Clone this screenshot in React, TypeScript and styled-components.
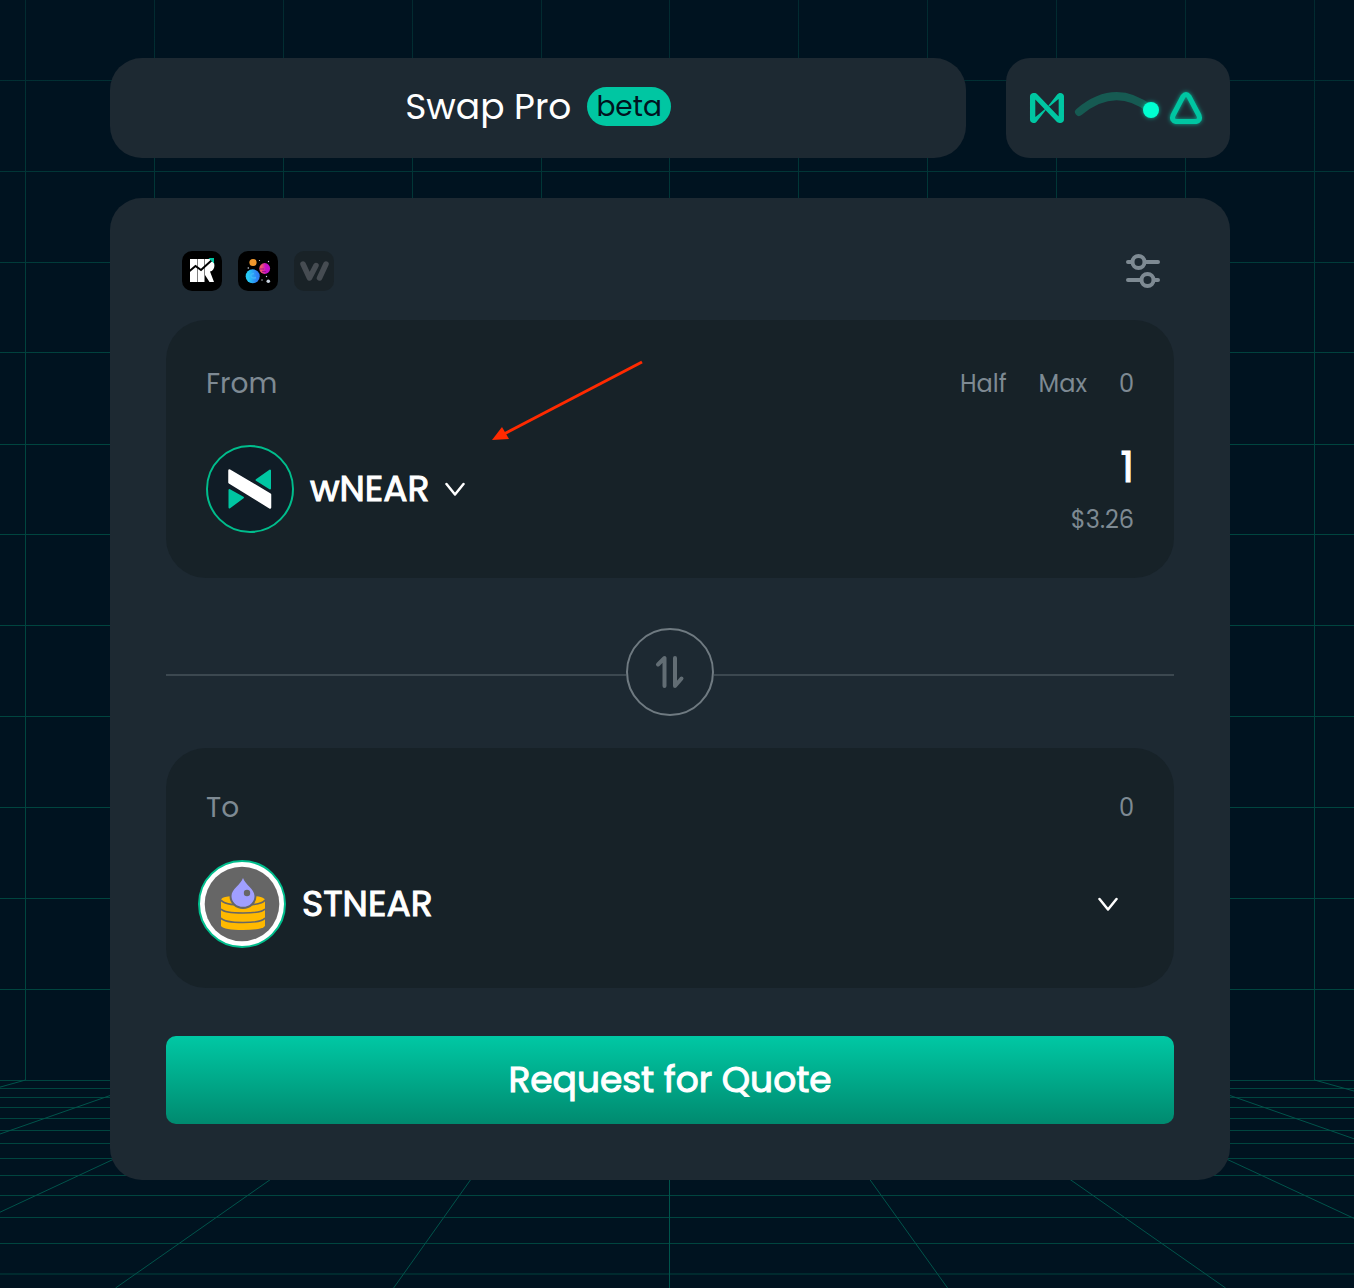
import React from "react";
import styled, { createGlobalStyle } from "styled-components";

const color = {
  page: "#001320",
  card: "#1d2932",
  panel: "#172228",
  mint: "#00c6a2",
  muted: "#7e8a93",
  white: "#ffffff",
};

const GlobalStyle = createGlobalStyle`
  * { box-sizing: border-box; }
  body {
    margin: 0;
    background: ${color.page};
    color: ${color.white};
    font-family: Poppins, Inter, "Liberation Sans", sans-serif;
  }
  button, input { font: inherit; color: inherit; }
  button { background: none; border: 0; padding: 0; cursor: pointer; }
  svg { display: block; flex: none; }
`;

const Backdrop = styled.svg`
  position: fixed;
  inset: 0;
  z-index: -1;
  width: 100%;
  height: 100%;
`;

const Page = styled.main`
  display: grid;
  gap: 40px;
  padding: 58px 124px 108px 110px;
`;

const Header = styled.header`
  display: flex;
  gap: 40px;
`;

const TitleBar = styled.div`
  flex: 1;
  display: flex;
  align-items: center;
  justify-content: center;
  gap: 16px;
  height: 100px;
  padding-bottom: 3px;
  border-radius: 32px;
  background: ${color.card};
`;

const Title = styled.h1`
  margin: 0;
  font-size: 36px;
  line-height: 48px;
  font-weight: 400;
`;

const Badge = styled.span`
  padding: 0 9px;
  border-radius: 20px;
  background: ${color.mint};
  color: #001320;
  font-size: 28px;
  line-height: 39px;
`;

const BridgeButton = styled.button`
  display: grid;
  place-items: center;
  width: 224px;
  height: 100px;
  && {
    border-radius: 24px;
    background: ${color.card};
  }
`;

const Card = styled.section`
  position: relative;
  padding: 53px 56px 56px;
  border-radius: 32px;
  background: ${color.card};
`;

const Toolbar = styled.div`
  display: flex;
  align-items: center;
  justify-content: space-between;
  padding: 0 12px 0 16px;
  margin-bottom: 29px;
`;

const Sources = styled.div`
  display: flex;
  gap: 16px;
`;

const Panel = styled.section<{ $gap: number; $pad: string }>`
  display: grid;
  gap: ${(p) => p.$gap}px;
  padding: ${(p) => p.$pad};
  border-radius: 40px;
  background: ${color.panel};
`;

const Row = styled.div`
  display: flex;
  align-items: center;
  justify-content: space-between;
`;

const Label = styled.span`
  color: ${color.muted};
  font-size: 28px;
  line-height: 38px;
`;

const Balance = styled.div`
  display: flex;
  gap: 32px;
  color: ${color.muted};
  font-size: 24px;
  line-height: 38px;
`;

const TokenButton = styled.button<{ $wide?: boolean }>`
  display: flex;
  align-items: center;
  gap: 16px;
  && {
    margin: ${(p) => (p.$wide ? "0 -8px" : "0")};
    padding-right: ${(p) => (p.$wide ? "24px" : "0")};
  }
`;

const TokenName = styled.span<{ $wide?: boolean }>`
  flex: ${(p) => (p.$wide ? 1 : "none")};
  text-align: left;
  font-size: 36px;
  line-height: 48px;
  -webkit-text-stroke: 1px currentColor;
`;

const Amount = styled.div`
  display: flex;
  flex-direction: column;
  gap: 16px;
  text-align: right;
`;

const AmountInput = styled.input`
  width: 320px;
  height: 46px;
  padding: 0;
  border: 0;
  outline: 0;
  background: none;
  text-align: right;
  && {
    font-size: 42px;
    line-height: 46px;
    -webkit-text-stroke: 1px currentColor;
  }
`;

const Fiat = styled.span`
  color: ${color.muted};
  font-size: 24px;
  line-height: 26px;
`;

const Divider = styled.div`
  display: flex;
  align-items: center;
  margin: 50px 0 32px;
  &::before,
  &::after {
    content: "";
    flex: 1;
    height: 2px;
    margin-top: 6px;
    background: #3c4850;
  }
`;

const FlipButton = styled.button`
  && {
    border: 2px solid #6f7a81;
    border-radius: 50%;
  }
  display: grid;
  place-items: center;
  width: 88px;
  height: 88px;
`;

const QuoteButton = styled.button`
  width: 100%;
  height: 88px;
  margin-top: 48px;
  && {
    padding-bottom: 2px;
    border-radius: 10px;
    background: linear-gradient(180deg, #00c8a4 0%, #008a6f 100%);
    font-size: 36px;
    -webkit-text-stroke: 1px currentColor;
  }
`;

const Pointer = styled.svg`
  position: absolute;
  left: 380px;
  top: 160px;
`;

const columns = [25, 154, 283, 412, 541, 669, 798, 927, 1056, 1185, 1314];
const rows = [80, 171, 262, 352, 444, 534, 625, 716, 807, 898, 989, 1080];
const floor = [1088, 1097, 1107, 1118, 1130, 1143, 1158, 1175, 1195, 1217, 1243];

function GridBackdrop() {
  return (
    <Backdrop viewBox="0 0 1354 1288" preserveAspectRatio="xMidYMin slice" aria-hidden="true">
      <defs>
        <linearGradient id="fade" gradientUnits="userSpaceOnUse" x1="0" y1="0" x2="0" y2="400">
          <stop offset="0" stopColor="#022a30" />
          <stop offset="1" stopColor="#00453f" />
        </linearGradient>
      </defs>
      <g fill="url(#fade)">
        {columns.map((x) => (
          <rect key={x} x={x} y="0" width="1" height="1080" />
        ))}
        {[...rows, ...floor].map((y) => (
          <rect key={y} x="0" y={y} width="1354" height="1" />
        ))}
      </g>
      <rect x="0" y="1273" width="1354" height="2" fill="#002a2e" />
      <g stroke="#00544b" strokeWidth="1">
        {columns.map((x) => {
          const top = x + 0.5;
          return <line key={x} x1={top} y1="1080" x2={669.5 + ((top - 669.5) * 388) / 180} y2="1288" />;
        })}
      </g>
    </Backdrop>
  );
}

function BridgeArt() {
  return (
    <svg width="200" height="60" viewBox="0 0 200 60" aria-hidden="true">
      <defs>
        <filter id="glow" x="-50%" y="-50%" width="200%" height="200%">
          <feDropShadow dx="0" dy="0" stdDeviation="2" floodColor="#00ffd1" floodOpacity="0.6" />
        </filter>
      </defs>
      <path
        transform="translate(11.6 15) scale(.382 .333)"
        fill={color.mint}
        d="M72.2 4.6 50 37c-1.300 1.900 1.200 4.200 3 2.600L74.900 18.800c.5-.4 1.200-.1 1.200.6v49.300c0 .7-.9 1-1.300.5L20 3.600C18.200 1.300 15.500 0 12.600 0h-2C5.300 0 1 4.300 1 9.600v70.800C1 85.700 5.300 90 10.600 90c3.300 0 6.400-1.700 8.200-4.600L41 53c1.300-1.900-1.200-4.200-3-2.600L16.100 71.200c-.5.4-1.200.1-1.200-.6V21.300c0-.7.9-1 1.300-.5L71 86.400c1.800 2.200 4.600 3.600 7.400 3.600h2c5.300 0 9.600-4.300 9.600-9.600V9.600C90 4.300 85.700 0 80.400 0c-3.300 0-6.400 1.700-8.200 4.600Z"
      />
      <path d="M61 34Q97 4 132 31" fill="none" stroke="#165a52" strokeWidth="8" strokeLinecap="round" />
      <circle cx="133" cy="32" r="8" fill="#00ffd1" filter="url(#glow)" />
      <path
        d="M165 18.500q3-4 6 0l10 19q2 5-3 6h-20q-5-1-3-6Z"
        fill="none"
        stroke={color.mint}
        strokeWidth="5"
        strokeLinejoin="round"
        filter="url(#glow)"
      />
    </svg>
  );
}

function RefSource() {
  return (
    <svg width="40" height="40" viewBox="0 0 40 40" role="img" aria-label="Ref">
      <rect width="40" height="40" rx="10" fill="#000" />
      <path d="M8 8h7.500v23H8ZM16 8h6.500v23H16ZM23 8h4.500c7 1.500 6 12 .5 12.500L32 31h-4.500L23 24Z" fill="#fff" />
      <path d="m7 20.500 6.500-5.500 5.500 4L30 9" fill="none" stroke="#000" strokeWidth="2" />
      <path d="M26.500 7H32v5.500Z" fill={color.mint} />
    </svg>
  );
}

function TrisolarisSource() {
  return (
    <svg width="40" height="40" viewBox="0 0 40 40" role="img" aria-label="Trisolaris">
      <rect width="40" height="40" rx="10" fill="#000" />
      <defs>
        <linearGradient id="blue">
          <stop offset="0.200" stopColor="#26c9f5" />
          <stop offset="0.800" stopColor="#2f80f5" />
        </linearGradient>
        <linearGradient id="pink">
          <stop offset="0.200" stopColor="#f0566c" />
          <stop offset="0.600" stopColor="#c510c8" />
        </linearGradient>
      </defs>
      <circle cx="15" cy="11.500" r="3.600" fill="#f2992e" />
      <circle cx="26.700" cy="17.500" r="5.400" fill="url(#pink)" />
      <path d="M22 18h4M24 20.500h4" stroke="#a3128f" strokeWidth="1" />
      <circle cx="14.700" cy="25.300" r="7" fill="url(#blue)" />
      <path d="M16 22.500q-4 .5-3 3t5 1" fill="none" stroke="#3fb4fa" strokeWidth="1.500" />
      <g fill="#c9d3e0">
        <circle cx="30.300" cy="30.300" r="1.800" />
        <circle cx="10.300" cy="17" r=".8" />
        <circle cx="21.500" cy="9.500" r=".6" />
        <circle cx="30.500" cy="10.500" r=".7" />
        <circle cx="24" cy="29" r=".7" />
        <circle cx="28.500" cy="25.500" r=".7" />
      </g>
    </svg>
  );
}

function WannaSource() {
  return (
    <svg width="40" height="40" viewBox="0 0 40 40" role="img" aria-label="WannaSwap">
      <rect width="40" height="40" rx="10" fill="#192227" />
      <path
        d="m9 13 6.500 14L22 14.500M25.500 27 32 13"
        fill="none"
        stroke="#464c52"
        strokeWidth="5.500"
        strokeLinecap="round"
        strokeLinejoin="round"
      />
    </svg>
  );
}

function SlidersIcon() {
  return (
    <svg width="38" height="38" viewBox="0 0 38 38" fill="none" stroke={color.muted} strokeWidth="4" strokeLinecap="round" aria-hidden="true">
      <circle cx="14.500" cy="10" r="6" />
      <path d="M4 10h4M21 10h13" />
      <circle cx="23.500" cy="28" r="6" />
      <path d="M4 28h13M30 28h4" />
    </svg>
  );
}

function WNearToken() {
  return (
    <svg width="88" height="88" viewBox="0 0 88 88" aria-hidden="true">
      <circle cx="44" cy="44" r="43" fill="#101c26" stroke="#00bd8c" strokeWidth="2" />
      <g fill={color.mint} stroke={color.mint} strokeWidth="2" strokeLinejoin="round">
        <path d="M64 25.500v18l-13.500-8.500Z" />
        <path d="M23.500 45v17.500l13.500-10Z" />
      </g>
      <path d="m23.500 25.500 40.500 24v13l-40.500-25Z" fill="#fff" stroke="#fff" strokeWidth="2.500" strokeLinejoin="round" />
    </svg>
  );
}

function StNearToken() {
  return (
    <svg width="88" height="88" viewBox="0 0 88 88" aria-hidden="true">
      <circle cx="44" cy="44" r="43" fill="#fff" stroke="#00bd8c" strokeWidth="2" />
      <circle cx="44" cy="44" r="37.300" fill="#666" />
      <path d="M23 40q0-4.500 22-4.500T67 40v26q-3 4-22 4t-22-4Z" fill="#ffb900" />
      <g fill="none" stroke="#666" strokeWidth="1.600">
        <path d="M23 40q3 5 22 5t22-5" />
        <path d="M23 49q3 4 22 4t22-4" />
        <path d="M23 58q3 4.500 22 4.500T67 58" />
      </g>
      <path d="M45 14c-3 8-13.500 12-13.500 22a13.500 13 0 0 0 27 0c0-10-10.500-14-13.500-22Z" fill="#666" />
      <path d="M45 18c-2.500 7-11.500 11-11.500 18a11.500 10.800 0 0 0 23 0c0-7-9-11-11.500-18Z" fill="#a09fff" />
      <circle cx="49" cy="33" r="3.200" fill="#666" />
    </svg>
  );
}

function Chevron() {
  return (
    <svg width="20" height="16" viewBox="0 0 20 16" aria-hidden="true">
      <path d="m1.500 3 8.500 10.500L18.500 3" fill="none" stroke="#fff" strokeWidth="2.500" strokeLinecap="round" strokeLinejoin="round" />
    </svg>
  );
}

export default function App() {
  return (
    <>
      <GlobalStyle />
      <GridBackdrop />
      <Page>
        <Header>
          <TitleBar>
            <Title>Swap Pro</Title>
            <Badge>beta</Badge>
          </TitleBar>
          <BridgeButton type="button" aria-label="Switch network">
            <BridgeArt />
          </BridgeButton>
        </Header>

        <Card>
          <Toolbar>
            <Sources>
              <RefSource />
              <TrisolarisSource />
              <WannaSource />
            </Sources>
            <button type="button" aria-label="Settings">
              <SlidersIcon />
            </button>
          </Toolbar>

          <Panel $gap={42} $pad="45px 40px">
            <Row>
              <Label as="label" htmlFor="amount">From</Label>
              <Balance>
                <button type="button">Half</button>
                <button type="button">Max</button>
                <span>0</span>
              </Balance>
            </Row>
            <Row>
              <TokenButton type="button">
                <WNearToken />
                <TokenName>wNEAR</TokenName>
                <Chevron />
              </TokenButton>
              <Amount>
                <AmountInput id="amount" inputMode="decimal" defaultValue="1" />
                <Fiat>$3.26</Fiat>
              </Amount>
            </Row>
          </Panel>

          <Divider>
            <FlipButton type="button" aria-label="Swap tokens">
              <svg width="84" height="84" viewBox="2 2 84 84" fill="none" stroke="#626d74" strokeWidth="4" strokeLinecap="round" strokeLinejoin="round" aria-hidden="true">
                <path d="m32 36.500 6.500-6.500v28M49 30v28l6.500-7.500" />
              </svg>
            </FlipButton>
          </Divider>

          <Panel $gap={33} $pad="41px 40px 40px">
            <Row>
              <Label>To</Label>
              <Balance>
                <span>0</span>
              </Balance>
            </Row>
            <TokenButton type="button" $wide>
              <StNearToken />
              <TokenName $wide>STNEAR</TokenName>
              <Chevron />
            </TokenButton>
          </Panel>

          <QuoteButton type="button">Request for Quote</QuoteButton>

          <Pointer width="156" height="84" viewBox="0 0 156 84" aria-hidden="true">
            <path d="M152 4 12 77" stroke="#ff2a00" strokeWidth="3" />
            <path d="m2 82 10-13 7 12Z" fill="#ff2a00" />
          </Pointer>
        </Card>
      </Page>
    </>
  );
}
